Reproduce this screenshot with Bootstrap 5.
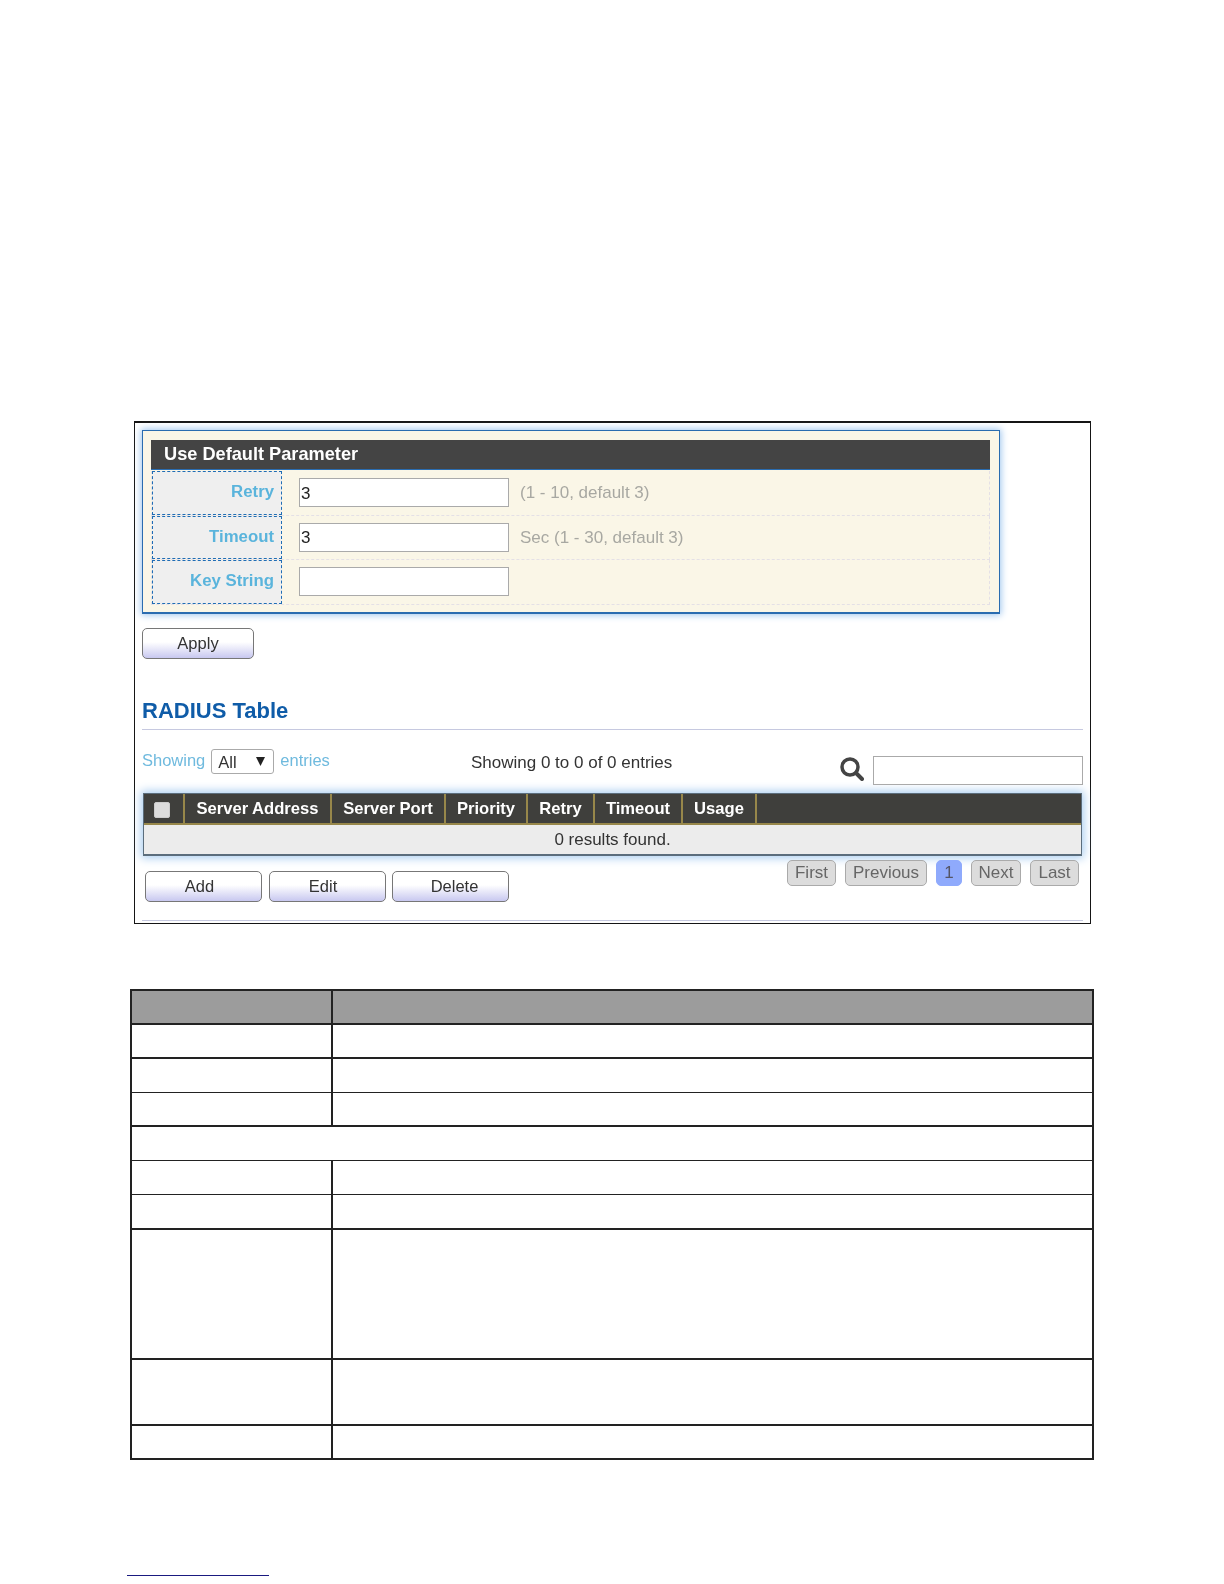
<!DOCTYPE html>
<html lang="en"><head><meta charset="utf-8"><title>RADIUS</title>
<link href="https://cdn.jsdelivr.net/npm/bootstrap@5.3.0/dist/css/bootstrap.min.css" rel="stylesheet">
<style>
body{margin:0;background:#fff;font-family:"Liberation Sans",Arial,sans-serif;font-size:17px;color:#333}
.shot{margin:421px 0 0 134px;width:957px;height:503px;border:1px solid #151515;border-top-width:2px;padding:0 7px}
.shot-soft{filter:blur(.35px)}
.panel-box{margin-top:7px;width:858px;height:184px;padding:9px 9px 9px 8px;background:#faf6e7;border:1px solid #2a6cb0;border-bottom-width:2px;box-shadow:0 0 7px 1px #9cc4ee}
.panel-head{height:29px;line-height:29px;padding-left:13px;background:#444;color:#fff;font-weight:700;font-size:18.2px;border-bottom:1px solid #2a6cb0;box-sizing:content-box;margin-bottom:1px}
.form-line{height:44.5px;border:1px dashed #e4e0e6;border-top:0}
.line-label{width:130px;flex:none;border:1px dashed #1f6db5;background:#efefef;color:#5ab4dc;font-weight:700;font-size:16.8px;text-align:right;padding-right:7px;line-height:39px}
.line-value{padding-left:17px;gap:11px}
.field{width:210px;height:29px;padding:2px 1px 0;border:1px solid #aaa;border-radius:0;font-size:17px;color:#222;line-height:1;margin-top:7px}
.hint{color:#a8a8a2;margin-top:7px;line-height:29px}
.gbtn{height:31px;padding:0;border:1px solid #777;border-radius:5px;color:#333;font-size:16.5px;line-height:1;background:linear-gradient(#fff 0,#fff 45%,#c8c8f0 100%)}
.gbtn-apply{width:112px;margin-top:14px;display:block}
.gbtn-row{width:117px}
.section-title{margin:34px 0 0;height:37px;line-height:36px;border-bottom:1px solid #c6c9e0;color:#0f5ca8;font-size:22px;font-weight:700}
.tools{height:63px}
.show-left{width:329px;margin-top:19px;gap:6px;color:#6fbade;font-size:16.5px;line-height:23px}
.size-pick{width:63px;height:25px;padding:0 0 0 6px;border:1px solid #aaa;border-radius:3px;font-size:16.5px;color:#333;background-position:right 7px center;background-size:11px 9px;background-image:url("data:image/svg+xml,%3Csvg xmlns='http://www.w3.org/2000/svg' viewBox='0 0 11 9'%3E%3Cpath fill='%23222' d='M1 0h9L5.500 9z'/%3E%3C/svg%3E")}
.show-mid{width:369px;margin-top:20px;line-height:25px;color:#333}
.search-ico{margin:27px 9px 0 0;flex:none}
.search-field{width:210px;height:29px;margin-top:26px;border:1px solid #aaa;border-radius:0;padding:0 4px}
.data-wrap{margin:0 1px;width:939px;height:63px;border:1px solid #5b6d7c;border-bottom-width:2px;background:#ececec;box-shadow:0 0 9px 2px #a9cdf0}
.data-tbl{margin:0;width:937px;table-layout:fixed;--bs-table-bg:transparent}
.data-tbl.table>:not(caption)>*>*{padding:0;border:0;background:transparent;color:#333;text-align:center;vertical-align:middle;box-shadow:none}
.data-tbl.table>thead>tr>th{height:30px;padding-top:2px;background:#3f3f3c;color:#fff;font-weight:700;font-size:16.6px;border-right:2px solid #97874a;border-bottom:2px solid #97874a;white-space:nowrap}
.data-tbl.table>thead>tr>th:last-child{border-right:0}
.data-tbl.table>tbody>tr>td{height:30px}
.tick{display:block;margin:0 0 0 10px;width:16px;height:16px;background:#dcdcdc;border:1px solid #ccc;border-radius:2px}
.foot-row{height:61px;margin-top:4px;border-bottom:1px solid #c6c9e0;padding:0 4px 0 3px}
.foot-btns{gap:6.5px;margin-top:11px}
.pager{gap:9px;margin:0;--bs-pagination-padding-x:0;--bs-pagination-padding-y:0;--bs-pagination-font-size:17px}
.pager .page-item .page-link{margin-left:0;height:26px;line-height:24px;text-align:center;padding:0;background:#dcdcdc;border:1px solid #aaa;border-radius:5px;color:#666}
.pager .page-item.active .page-link{background:#8faafc;border-color:#8faafc;color:#556}
.pager .page-item .pg-first{width:49px}.pager .page-item .pg-prev{width:82px}.pager .page-item .pg-one{width:26px}.pager .page-item .pg-next{width:50px}.pager .page-item .pg-last{width:49px}
.spec-tbl{margin:65px 0 0 130px;width:964px;table-layout:fixed;border-collapse:collapse}
.spec-tbl.table>:not(caption)>*>*{padding:0;background:#fff;border:0;border-left:2px solid #222;border-right:2px solid #222;border-bottom:2px solid #222;box-shadow:none}
.spec-tbl.table>thead>tr>th{background:#9c9c9c;border-top:2px solid #222;height:34px}
.spec-tbl.table>tbody>tr.thin>td{border-bottom-width:1px}
.h34{height:34px}.h35{height:35px}.h130{height:130px}.h66{height:66px}
.note-rule{margin:115px 0 0 127px;width:142px;height:0;border-top:1px solid #1a1a80}
</style></head><body>
<section class="shot shot-soft">
  <div class="panel-box">
    <div class="panel-head">Use Default Parameter</div>
    <div class="form-line d-flex"><div class="line-label">Retry</div><div class="line-value d-flex"><input class="form-control field" value="3" aria-label="Retry"><span class="hint">(1 - 10, default 3)</span></div></div>
    <div class="form-line d-flex"><div class="line-label">Timeout</div><div class="line-value d-flex"><input class="form-control field" value="3" aria-label="Timeout"><span class="hint">Sec (1 - 30, default 3)</span></div></div>
    <div class="form-line d-flex"><div class="line-label">Key String</div><div class="line-value d-flex"><input class="form-control field" aria-label="Key String"></div></div>
  </div>
  <button class="btn gbtn gbtn-apply">Apply</button>
  <h2 class="section-title">RADIUS Table</h2>
  <div class="tools d-flex align-items-start">
    <div class="show-left d-flex"><span>Showing</span><select class="form-select size-pick" aria-label="Entries"><option>All</option></select><span>entries</span></div>
    <div class="show-mid">Showing 0 to 0 of 0 entries</div>
    <svg class="search-ico" width="24" height="24" viewBox="0 0 24 24" aria-hidden="true"><circle cx="10" cy="10" r="8" fill="none" stroke="#444" stroke-width="3.500"/><path d="M16 16l6 6" stroke="#444" stroke-width="4" stroke-linecap="round"/></svg>
    <input class="form-control search-field" aria-label="Search">
  </div>
  <div class="data-wrap">
    <table class="table data-tbl">
      <colgroup><col style="width:40px"><col style="width:147px"><col style="width:114px"><col style="width:82px"><col style="width:67px"><col style="width:88px"><col style="width:74px"><col></colgroup>
      <thead><tr><th><span class="tick"></span></th><th>Server Address</th><th>Server Port</th><th>Priority</th><th>Retry</th><th>Timeout</th><th>Usage</th><th></th></tr></thead>
      <tbody><tr><td colspan="8">0 results found.</td></tr></tbody>
    </table>
  </div>
  <div class="foot-row d-flex justify-content-between align-items-start">
    <div class="foot-btns d-flex"><button class="btn gbtn gbtn-row pe-2">Add</button><button class="btn gbtn gbtn-row pe-2">Edit</button><button class="btn gbtn gbtn-row ps-2">Delete</button></div>
    <ul class="pagination pager">
      <li class="page-item"><a class="page-link pg-first" href="#">First</a></li>
      <li class="page-item"><a class="page-link pg-prev" href="#">Previous</a></li>
      <li class="page-item active"><a class="page-link pg-one" href="#">1</a></li>
      <li class="page-item"><a class="page-link pg-next" href="#">Next</a></li>
      <li class="page-item"><a class="page-link pg-last" href="#">Last</a></li>
    </ul>
  </div>
</section>
<table class="table spec-tbl">
  <colgroup><col style="width:201px"><col></colgroup>
  <thead><tr><th></th><th></th></tr></thead>
  <tbody>
    <tr><td class="h34"></td><td></td></tr>
    <tr class="thin"><td class="h34"></td><td></td></tr>
    <tr><td class="h34"></td><td></td></tr>
    <tr class="thin"><td class="h34" colspan="2"></td></tr>
    <tr class="thin"><td class="h34"></td><td></td></tr>
    <tr><td class="h35"></td><td></td></tr>
    <tr><td class="h130"></td><td></td></tr>
    <tr><td class="h66"></td><td></td></tr>
    <tr><td class="h34"></td><td></td></tr>
  </tbody>
</table>
<div class="note-rule"></div>
<script src="https://cdn.jsdelivr.net/npm/bootstrap@5.3.0/dist/js/bootstrap.bundle.min.js"></script>
</body></html>
